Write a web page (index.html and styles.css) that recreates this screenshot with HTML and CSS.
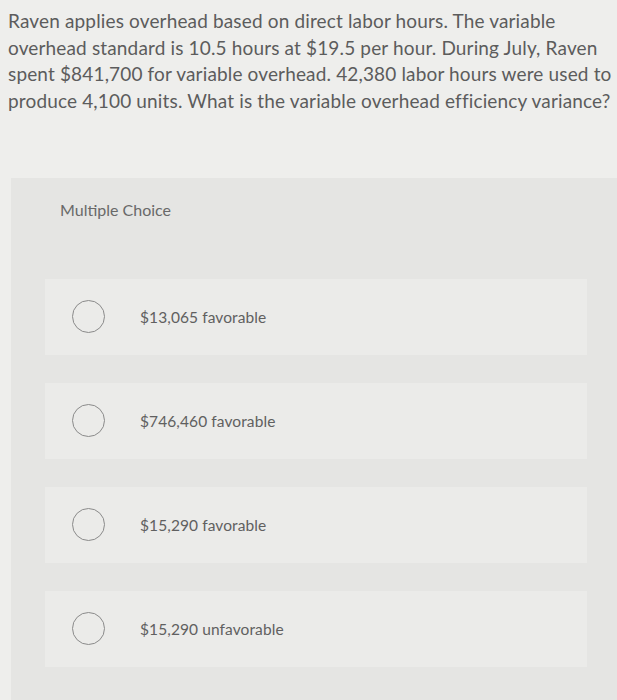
FILE: index.html
```html
<!DOCTYPE html>
<html>
<head>
<meta charset="utf-8">
<link rel="stylesheet" href="styles.css">
</head>
<body>
<div class="page">
  <p class="question">Raven applies overhead based on direct labor hours. The variable overhead standard is 10.5 hours at $19.5 per hour. During July, Raven spent $841,700 for variable overhead. 42,380 labor hours were used to produce 4,100 units. What is the variable overhead efficiency variance?</p>
  <div class="panel">
    <div class="label">Multiple Choice</div>
    <div class="options">
      <div class="option"><span class="radio"></span><span class="otext">$13,065 favorable</span></div>
      <div class="option"><span class="radio"></span><span class="otext">$746,460 favorable</span></div>
      <div class="option"><span class="radio"></span><span class="otext">$15,290 favorable</span></div>
      <div class="option"><span class="radio"></span><span class="otext">$15,290 unfavorable</span></div>
    </div>
  </div>
</div>
</body>
</html>
```
FILE: styles.css
```css
html, body {
  margin: 0;
  padding: 0;
  background: #eeeeec;
}
.page {
  width: 617px;
  height: 700px;
  overflow: hidden;
  font-family: Lato, "Open Sans", sans-serif;
  color: #5c5c5c;
}
.question {
  margin: 0;
  padding: 8px 0 0 8px;
  font-size: 19px;
  line-height: 26.7px;
  width: 617px;
  box-sizing: border-box;
  letter-spacing: 0.15px;
}
.panel {
  margin: 63px 0 0 11px;
  background: #e5e5e3;
  height: 540px;
  padding: 22px 30px 0 34px;
}
.label {
  margin-left: 15px;
  font-size: 16px;
  color: #696969;
  line-height: 20px;
}
.options {
  margin-top: 59px;
  display: flex;
  flex-direction: column;
  gap: 28px;
}
.option {
  background: #ebebe9;
  height: 76px;
  display: flex;
  align-items: center;
  padding-left: 27px;
}
.radio {
  width: 31px;
  height: 31px;
  border: 1.5px solid #8a8a8a;
  border-radius: 50%;
  flex: none;
}
.otext {
  margin-left: 35px;
  font-size: 15.5px;
  letter-spacing: 0.1px;
  color: #606060;
}
```
